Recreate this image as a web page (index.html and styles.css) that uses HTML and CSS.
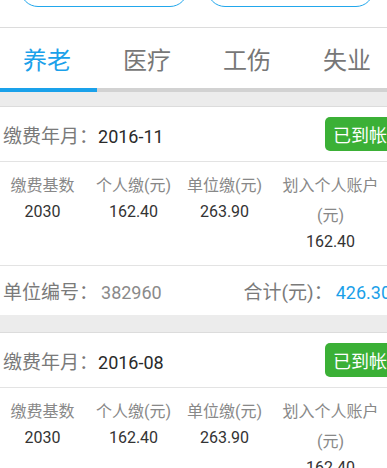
FILE: index.html
```html
<!DOCTYPE html>
<html lang="zh-CN">
<head>
<meta charset="utf-8">
<title>缴费记录</title>
<link rel="stylesheet" href="styles.css">
</head>
<body>
<div class="screen">
  <div class="top-actions">
    <div class="action-btn"></div>
    <div class="action-btn"></div>
  </div>
  <nav class="tabs">
    <div class="tab active">养老</div>
    <div class="tab">医疗</div>
    <div class="tab">工伤</div>
    <div class="tab">失业</div>
  </nav>
  <div class="list">
    <section class="card">
      <div class="card-head">
        <div class="period"><span class="lbl">缴费年月：</span><span class="val">2016-11</span></div>
        <div class="status">已到帐</div>
      </div>
      <div class="amounts">
        <div class="col"><div class="cell-label">缴费基数</div><div class="cell-value">2030</div></div>
        <div class="col"><div class="cell-label">个人缴(元)</div><div class="cell-value">162.40</div></div>
        <div class="col"><div class="cell-label">单位缴(元)</div><div class="cell-value">263.90</div></div>
        <div class="col"><div class="cell-label">划入个人账户<br>(元)</div><div class="cell-value">162.40</div></div>
      </div>
      <div class="card-foot">
        <div><span class="lbl">单位编号：</span><span class="code">382960</span></div>
        <div><span class="lbl">合计(元)：</span><span class="total">426.30</span></div>
      </div>
    </section>
    <section class="card">
      <div class="card-head">
        <div class="period"><span class="lbl">缴费年月：</span><span class="val">2016-08</span></div>
        <div class="status">已到帐</div>
      </div>
      <div class="amounts">
        <div class="col"><div class="cell-label">缴费基数</div><div class="cell-value">2030</div></div>
        <div class="col"><div class="cell-label">个人缴(元)</div><div class="cell-value">162.40</div></div>
        <div class="col"><div class="cell-label">单位缴(元)</div><div class="cell-value">263.90</div></div>
        <div class="col"><div class="cell-label">划入个人账户<br>(元)</div><div class="cell-value">162.40</div></div>
      </div>
      <div class="card-foot">
        <div><span class="lbl">单位编号：</span><span class="code">382960</span></div>
        <div><span class="lbl">合计(元)：</span><span class="total">426.30</span></div>
      </div>
    </section>
  </div>
</div>
</body>
</html>
```

FILE: styles.css
```css
html, body {
  margin: 0;
  padding: 0;
  background: #ffffff;
  overflow: hidden;
}
body {
  width: 387px;
  height: 468px;
  font-family: Roboto, "Noto Sans CJK SC", sans-serif;
}
.screen {
  width: 400px;
  margin-left: -3px;
}
.top-actions {
  height: 28px;
  box-sizing: border-box;
  display: flex;
  align-items: flex-end;
  gap: 19px;
  padding: 0 23px 20px;
  overflow: hidden;
  border-bottom: 1px solid #dcdcdc;
}
.action-btn {
  flex: 1;
  flex-shrink: 0;
  height: 40px;
  box-sizing: border-box;
  border: 1.5px solid #22a7ec;
  border-radius: 18px;
}
.tabs {
  display: flex;
  height: 64px;
  box-sizing: border-box;
  border-bottom: 4px solid #d2d2d2;
}
.tab {
  position: relative;
  width: 100px;
  flex-shrink: 0;
  display: flex;
  align-items: center;
  justify-content: center;
  font-size: 24px;
  color: #777777;
}
.tab.active {
  color: #1ba1ea;
}
.tab.active::after {
  content: "";
  position: absolute;
  left: 0;
  right: 0;
  bottom: -4px;
  height: 4px;
  background: #1aa1ea;
}
.list {
  background: #ececec;
  padding-top: 14px;
  display: flex;
  flex-direction: column;
  gap: 17px;
}
.card {
  background: #ffffff;
  border-top: 1px solid #dcdcdc;
}
.card-head {
  height: 54px;
  display: flex;
  align-items: center;
  justify-content: space-between;
  padding: 0 2px 0 6px;
  border-bottom: 1px solid #e3e3e3;
  font-size: 18px;
}
.lbl {
  font-size: 19px;
  color: #7a7a7a;
}
.val {
  color: #2a2a2a;
}
.status {
  height: 34px;
  display: flex;
  align-items: center;
  padding: 0 8px;
  border-radius: 5px;
  background: #3bb036;
  color: #ffffff;
  font-size: 18px;
}
.amounts {
  display: grid;
  grid-template-columns: 91px 91px 91px 1fr;
  padding: 9px 6px 12px 0;
  border-bottom: 1px solid #e3e3e3;
  text-align: center;
}
.cell-label {
  font-size: 16px;
  line-height: 30px;
  color: #888888;
}
.cell-value {
  font-size: 16px;
  line-height: 22px;
  color: #333333;
}
.card-foot {
  height: 49px;
  display: flex;
  align-items: center;
  justify-content: space-between;
  padding: 0 6px 0 6px;
  font-size: 18px;
}
.code {
  margin-left: 3px;
  color: #8a8a8a;
}
.total {
  margin-left: 3px;
  color: #1a9fe9;
}
```
